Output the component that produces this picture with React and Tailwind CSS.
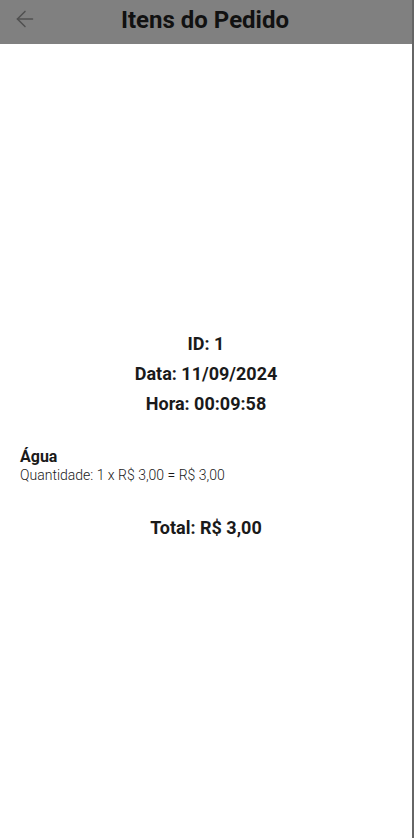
import { ArrowLeft } from "lucide-react";

export default function App() {
  return (
    <div className="relative h-[838px] w-[414px] overflow-hidden bg-white font-['Roboto',sans-serif] text-[#1a1a1a]">
      <div className="relative flex h-[44px] items-center justify-center bg-[#808080]">
        <ArrowLeft className="absolute left-[12px] top-[6px] h-[26px] w-[26px] text-[#505050]" strokeWidth={1.4} />
        <h1 className="pb-[4px] pr-[4px] text-[24px] font-bold leading-none text-[#111]">Itens do Pedido</h1>
      </div>
      <div className="flex flex-col pr-[2px] pt-[289px]">
        <div className="flex flex-col items-center gap-[8px] text-[18px] font-bold leading-[22px]">
          <p>ID: 1</p>
          <p>Data: 11/09/2024</p>
          <p>Hora: 00:09:58</p>
        </div>
        <div className="mt-[32px] px-[20px]">
          <p className="text-[16px] font-bold leading-[20px]">Água</p>
          <p className="text-[14px] font-light leading-[16px]">Quantidade: 1 x R$ 3,00 = R$ 3,00</p>
        </div>
        <p className="mt-[34px] text-center text-[18px] font-bold leading-[22px]">Total: R$ 3,00</p>
      </div>
      <div className="absolute right-0 top-0 h-full w-[2px] bg-[#666]" />
    </div>
  );
}
